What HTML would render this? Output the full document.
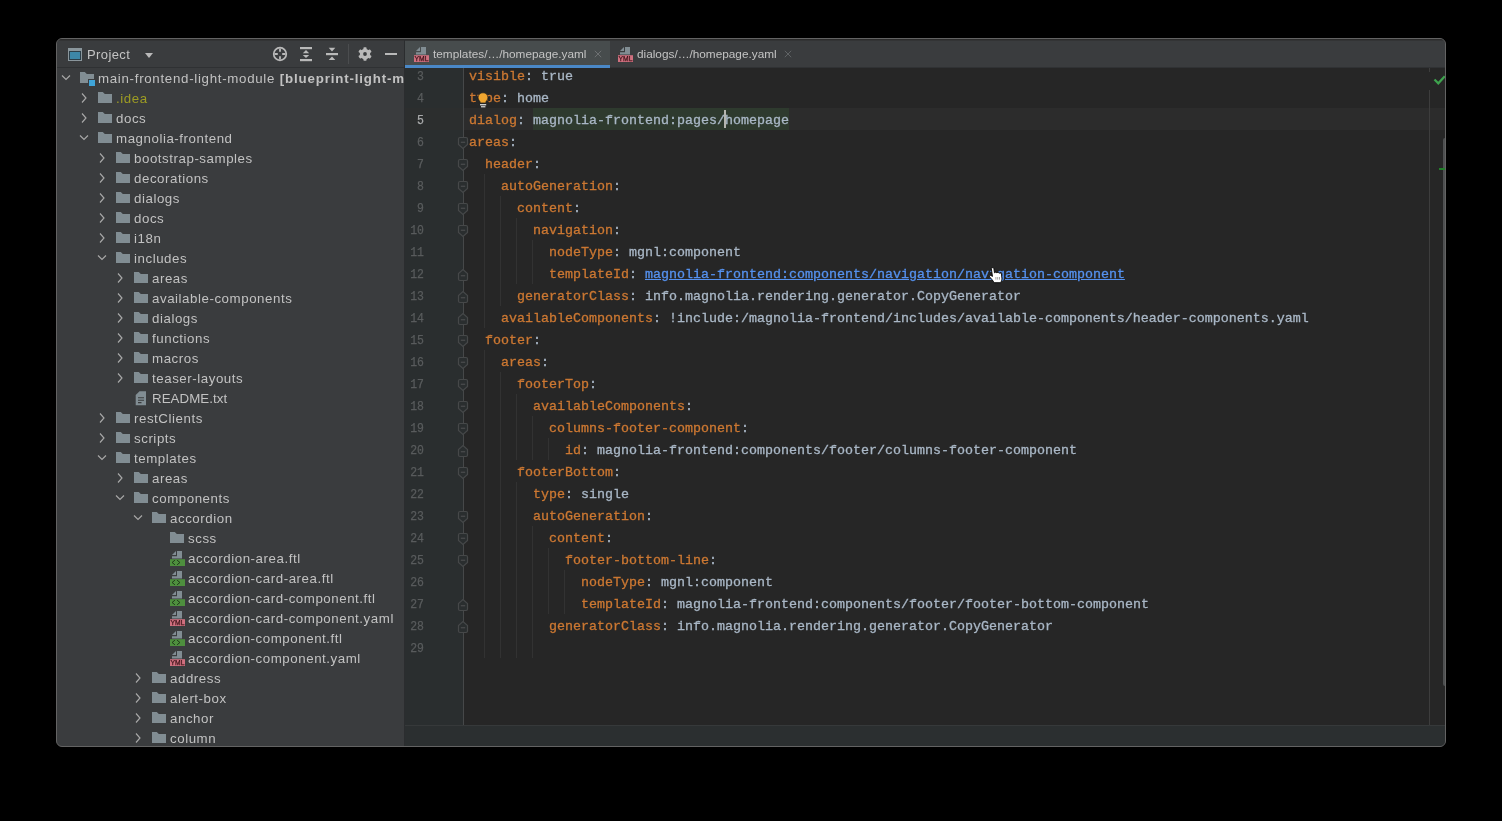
<!DOCTYPE html>
<html><head><meta charset="utf-8"><title>IDE</title><style>
*{margin:0;padding:0;box-sizing:border-box}
html,body{width:1502px;height:821px;background:#000000;overflow:hidden}
body{position:relative;font-family:"Liberation Sans",sans-serif}
#win{position:absolute;left:56px;top:38px;width:1390px;height:709px;border:1px solid #636363;border-radius:6px;overflow:hidden;background:#3a3c3e}
#in{position:absolute;left:-57px;top:-39px;width:1502px;height:821px;will-change:transform}
.abs{position:absolute}
#tree{position:absolute;left:57px;top:68px;width:347px;height:679px;overflow:hidden}
#treei{position:absolute;left:-57px;top:-68px;width:1502px;height:821px}
.tr{position:absolute;height:20px;line-height:20px;font-size:13.3px;letter-spacing:0.55px;white-space:nowrap}
.tr b{font-weight:bold;letter-spacing:0.85px}
.ln{position:absolute;left:405px;width:19px;height:22px;line-height:22px;text-align:right;font-family:"Liberation Mono",monospace;font-size:13.33px;color:#595c5d;transform:scaleX(0.86);transform-origin:100% 50%;-webkit-text-stroke:0.25px currentColor}
.ln.cur{color:#a9aaab}
.cl{position:absolute;height:22px;line-height:22px;font-family:"Liberation Mono",monospace;font-size:13.333px;white-space:pre;color:#a9b7c6;-webkit-text-stroke:0.3px currentColor}
.k{color:#cc7832}
.p{color:#a9b7c6}
.v{color:#a9b7c6}
.lk{color:#5591ee;text-decoration:underline}
.gd{position:absolute;width:1px;background:#323232}
.tab{position:absolute;top:40px;height:29px;line-height:29px;font-size:11.8px;color:#c4c4c4;white-space:nowrap}
.ptitle{position:absolute;left:87px;top:40.5px;height:28px;line-height:28px;font-size:13px;letter-spacing:0.4px;color:#c4c4c4}
</style></head>
<body>
<div id="win"><div id="in">
  <div class="abs" style="left:57px;top:39px;width:347px;height:28px;background:#3a3c3e"></div>
  <div class="abs" style="left:57px;top:67px;width:347px;height:1px;background:#2f3133"></div>
  <div class="abs" style="left:405px;top:39px;width:1041px;height:29px;background:#3a3c3e"></div>
  <div class="abs" style="left:405px;top:40px;width:205px;height:25px;background:#474c4d"></div>
  <div class="abs" style="left:57px;top:39px;width:1389px;height:1px;background:#2b2b2b"></div>
  <div class="abs" style="left:57px;top:40px;width:1389px;height:1px;background:#333435"></div>
  <div class="abs" style="left:405px;top:67px;width:1041px;height:1px;background:#303234"></div>
  <div class="abs" style="left:405px;top:65px;width:205px;height:3px;background:#4a88c7"></div>
  <div class="abs" style="left:404px;top:39px;width:1px;height:708px;background:#2b2d2f"></div>
  <div class="abs" style="left:405px;top:68px;width:59px;height:657px;background:#2a2e2f"></div>
  <div class="abs" style="left:464px;top:68px;width:982px;height:657px;background:#262626"></div>
  <div class="abs" style="left:464px;top:108px;width:982px;height:22px;background:#2c2c2c"></div>
  <div class="abs" style="left:405px;top:108px;width:58px;height:22px;background:#2c2e2e"></div>
  <div class="abs" style="left:533px;top:108px;width:256px;height:22px;background:#2e3a2e"></div>
  <div class="abs" style="left:463px;top:68px;width:1px;height:657px;background:#464849"></div>
  <div class="abs" style="left:405px;top:726px;width:1041px;height:22px;background:#2b2f30"></div>
  <div class="abs" style="left:405px;top:725px;width:1041px;height:1px;background:#36393a"></div>
  <div class="abs" style="left:1429px;top:68px;width:1px;height:4px;background:#3d3d3d"></div>
  <div class="abs" style="left:1429px;top:90px;width:1px;height:635px;background:#3d3d3d"></div>
  <div class="abs" style="left:1443px;top:138px;width:3px;height:548px;background:#4f5152;border-radius:2px 0 0 2px"></div>
  <div class="abs" style="left:1439px;top:168px;width:7px;height:2px;background:#23802b"></div>
  <div class="abs" style="left:724px;top:110px;width:2px;height:18px;background:#b5b5b0"></div>
  <div class="ptitle">Project</div>
  <div class="tab" style="left:433px">templates/…/homepage.yaml</div>
  <div class="tab" style="left:637px">dialogs/…/homepage.yaml</div>
  <div class="gd" style="left:484px;top:174px;height:154px"></div><div class="gd" style="left:500px;top:196px;height:110px"></div><div class="gd" style="left:516px;top:218px;height:66px"></div><div class="gd" style="left:532px;top:240px;height:44px"></div><div class="gd" style="left:484px;top:350px;height:308px"></div><div class="gd" style="left:500px;top:372px;height:286px"></div><div class="gd" style="left:516px;top:394px;height:66px"></div><div class="gd" style="left:532px;top:416px;height:44px"></div><div class="gd" style="left:548px;top:438px;height:22px"></div><div class="gd" style="left:516px;top:482px;height:176px"></div><div class="gd" style="left:532px;top:526px;height:132px"></div><div class="gd" style="left:548px;top:548px;height:66px"></div><div class="gd" style="left:564px;top:570px;height:44px"></div>
  <div id="tree"><div id="treei">
  <div class="tr" style="left:98px;top:69px;color:#c2c2c2;letter-spacing:0.7px;">main-frontend-light-module<b> [blueprint-light-module]</b></div><div class="tr" style="left:116px;top:89px;color:#9d9c24;">.idea</div><div class="tr" style="left:116px;top:109px;color:#c2c2c2;">docs</div><div class="tr" style="left:116px;top:129px;color:#c2c2c2;">magnolia-frontend</div><div class="tr" style="left:134px;top:149px;color:#c2c2c2;">bootstrap-samples</div><div class="tr" style="left:134px;top:169px;color:#c2c2c2;">decorations</div><div class="tr" style="left:134px;top:189px;color:#c2c2c2;">dialogs</div><div class="tr" style="left:134px;top:209px;color:#c2c2c2;">docs</div><div class="tr" style="left:134px;top:229px;color:#c2c2c2;">i18n</div><div class="tr" style="left:134px;top:249px;color:#c2c2c2;">includes</div><div class="tr" style="left:152px;top:269px;color:#c2c2c2;">areas</div><div class="tr" style="left:152px;top:289px;color:#c2c2c2;">available-components</div><div class="tr" style="left:152px;top:309px;color:#c2c2c2;">dialogs</div><div class="tr" style="left:152px;top:329px;color:#c2c2c2;">functions</div><div class="tr" style="left:152px;top:349px;color:#c2c2c2;">macros</div><div class="tr" style="left:152px;top:369px;color:#c2c2c2;">teaser-layouts</div><div class="tr" style="left:152px;top:389px;color:#c2c2c2;letter-spacing:0.05px;">README.txt</div><div class="tr" style="left:134px;top:409px;color:#c2c2c2;">restClients</div><div class="tr" style="left:134px;top:429px;color:#c2c2c2;">scripts</div><div class="tr" style="left:134px;top:449px;color:#c2c2c2;">templates</div><div class="tr" style="left:152px;top:469px;color:#c2c2c2;">areas</div><div class="tr" style="left:152px;top:489px;color:#c2c2c2;">components</div><div class="tr" style="left:170px;top:509px;color:#c2c2c2;">accordion</div><div class="tr" style="left:188px;top:529px;color:#c2c2c2;">scss</div><div class="tr" style="left:188px;top:549px;color:#c2c2c2;">accordion-area.ftl</div><div class="tr" style="left:188px;top:569px;color:#c2c2c2;">accordion-card-area.ftl</div><div class="tr" style="left:188px;top:589px;color:#c2c2c2;">accordion-card-component.ftl</div><div class="tr" style="left:188px;top:609px;color:#c2c2c2;">accordion-card-component.yaml</div><div class="tr" style="left:188px;top:629px;color:#c2c2c2;">accordion-component.ftl</div><div class="tr" style="left:188px;top:649px;color:#c2c2c2;">accordion-component.yaml</div><div class="tr" style="left:170px;top:669px;color:#c2c2c2;">address</div><div class="tr" style="left:170px;top:689px;color:#c2c2c2;">alert-box</div><div class="tr" style="left:170px;top:709px;color:#c2c2c2;">anchor</div><div class="tr" style="left:170px;top:729px;color:#c2c2c2;">column</div>
  <svg class="abs" style="left:0;top:0" width="1502" height="821" viewBox="0 0 1502 821"><path d="M62,75.5 L66,79.5 L70,75.5" fill="none" stroke="#a8a8a8" stroke-width="1.15"/><path d="M80,72 h4.8 l2,2 h7.2 v9 h-14 z" fill="#818d93"/><rect x="88.5" y="79.5" width="7" height="7" fill="#3fa4d8" stroke="#3a3c3e" stroke-width="1"/><path d="M82,93.5 L86,98 L82,102.5" fill="none" stroke="#a8a8a8" stroke-width="1.15"/><path d="M98,92 h4.8 l2,2 h7.2 v9 h-14 z" fill="#818d93"/><path d="M82,113.5 L86,118 L82,122.5" fill="none" stroke="#a8a8a8" stroke-width="1.15"/><path d="M98,112 h4.8 l2,2 h7.2 v9 h-14 z" fill="#818d93"/><path d="M80,135.5 L84,139.5 L88,135.5" fill="none" stroke="#a8a8a8" stroke-width="1.15"/><path d="M98,132 h4.8 l2,2 h7.2 v9 h-14 z" fill="#818d93"/><path d="M100,153.5 L104,158 L100,162.5" fill="none" stroke="#a8a8a8" stroke-width="1.15"/><path d="M116,152 h4.8 l2,2 h7.2 v9 h-14 z" fill="#818d93"/><path d="M100,173.5 L104,178 L100,182.5" fill="none" stroke="#a8a8a8" stroke-width="1.15"/><path d="M116,172 h4.8 l2,2 h7.2 v9 h-14 z" fill="#818d93"/><path d="M100,193.5 L104,198 L100,202.5" fill="none" stroke="#a8a8a8" stroke-width="1.15"/><path d="M116,192 h4.8 l2,2 h7.2 v9 h-14 z" fill="#818d93"/><path d="M100,213.5 L104,218 L100,222.5" fill="none" stroke="#a8a8a8" stroke-width="1.15"/><path d="M116,212 h4.8 l2,2 h7.2 v9 h-14 z" fill="#818d93"/><path d="M100,233.5 L104,238 L100,242.5" fill="none" stroke="#a8a8a8" stroke-width="1.15"/><path d="M116,232 h4.8 l2,2 h7.2 v9 h-14 z" fill="#818d93"/><path d="M98,255.5 L102,259.5 L106,255.5" fill="none" stroke="#a8a8a8" stroke-width="1.15"/><path d="M116,252 h4.8 l2,2 h7.2 v9 h-14 z" fill="#818d93"/><path d="M118,273.5 L122,278 L118,282.5" fill="none" stroke="#a8a8a8" stroke-width="1.15"/><path d="M134,272 h4.8 l2,2 h7.2 v9 h-14 z" fill="#818d93"/><path d="M118,293.5 L122,298 L118,302.5" fill="none" stroke="#a8a8a8" stroke-width="1.15"/><path d="M134,292 h4.8 l2,2 h7.2 v9 h-14 z" fill="#818d93"/><path d="M118,313.5 L122,318 L118,322.5" fill="none" stroke="#a8a8a8" stroke-width="1.15"/><path d="M134,312 h4.8 l2,2 h7.2 v9 h-14 z" fill="#818d93"/><path d="M118,333.5 L122,338 L118,342.5" fill="none" stroke="#a8a8a8" stroke-width="1.15"/><path d="M134,332 h4.8 l2,2 h7.2 v9 h-14 z" fill="#818d93"/><path d="M118,353.5 L122,358 L118,362.5" fill="none" stroke="#a8a8a8" stroke-width="1.15"/><path d="M134,352 h4.8 l2,2 h7.2 v9 h-14 z" fill="#818d93"/><path d="M118,373.5 L122,378 L118,382.5" fill="none" stroke="#a8a8a8" stroke-width="1.15"/><path d="M134,372 h4.8 l2,2 h7.2 v9 h-14 z" fill="#818d93"/><path d="M139.5,391.2 h6.5 v14 h-10.3 v-10.3 z" fill="#818d93"/><path d="M138,397.8 h6 M138,400.2 h6 M138,402.6 h3.5" stroke="#3a3c3e" stroke-width="1.1"/><path d="M100,413.5 L104,418 L100,422.5" fill="none" stroke="#a8a8a8" stroke-width="1.15"/><path d="M116,412 h4.8 l2,2 h7.2 v9 h-14 z" fill="#818d93"/><path d="M100,433.5 L104,438 L100,442.5" fill="none" stroke="#a8a8a8" stroke-width="1.15"/><path d="M116,432 h4.8 l2,2 h7.2 v9 h-14 z" fill="#818d93"/><path d="M98,455.5 L102,459.5 L106,455.5" fill="none" stroke="#a8a8a8" stroke-width="1.15"/><path d="M116,452 h4.8 l2,2 h7.2 v9 h-14 z" fill="#818d93"/><path d="M118,473.5 L122,478 L118,482.5" fill="none" stroke="#a8a8a8" stroke-width="1.15"/><path d="M134,472 h4.8 l2,2 h7.2 v9 h-14 z" fill="#818d93"/><path d="M116,495.5 L120,499.5 L124,495.5" fill="none" stroke="#a8a8a8" stroke-width="1.15"/><path d="M134,492 h4.8 l2,2 h7.2 v9 h-14 z" fill="#818d93"/><path d="M134,515.5 L138,519.5 L142,515.5" fill="none" stroke="#a8a8a8" stroke-width="1.15"/><path d="M152,512 h4.8 l2,2 h7.2 v9 h-14 z" fill="#818d93"/><path d="M170,532 h4.8 l2,2 h7.2 v9 h-14 z" fill="#818d93"/><path d="M177,551 h5 v7.5 h-10 v-2.2 h5 z" fill="#818d93"/><path d="M172,555 L176,551 v4 z" fill="#818d93"/><rect x="170" y="559.2" width="15" height="6.8" fill="#4e8f3e"/><path d="M174.9,560.2 l-2.8,2.3 l2.8,2.3 M177.1,560.2 l2.8,2.3 l-2.8,2.3" fill="none" stroke="#1c3416" stroke-width="0.95"/><path d="M177,571 h5 v7.5 h-10 v-2.2 h5 z" fill="#818d93"/><path d="M172,575 L176,571 v4 z" fill="#818d93"/><rect x="170" y="579.2" width="15" height="6.8" fill="#4e8f3e"/><path d="M174.9,580.2 l-2.8,2.3 l2.8,2.3 M177.1,580.2 l2.8,2.3 l-2.8,2.3" fill="none" stroke="#1c3416" stroke-width="0.95"/><path d="M177,591 h5 v7.5 h-10 v-2.2 h5 z" fill="#818d93"/><path d="M172,595 L176,591 v4 z" fill="#818d93"/><rect x="170" y="599.2" width="15" height="6.8" fill="#4e8f3e"/><path d="M174.9,600.2 l-2.8,2.3 l2.8,2.3 M177.1,600.2 l2.8,2.3 l-2.8,2.3" fill="none" stroke="#1c3416" stroke-width="0.95"/><path d="M177,611 h5 v7.5 h-10 v-2.2 h5 z" fill="#818d93"/><path d="M172,615 L176,611 v4 z" fill="#818d93"/><rect x="170" y="619.2" width="15" height="6.8" fill="#d0707f"/><text x="170.6" y="625.3" font-size="7.2" font-family="Liberation Sans" textLength="13.8" lengthAdjust="spacingAndGlyphs" fill="#3a1218" stroke="#3a1218" stroke-width="0.25">YML</text><path d="M177,631 h5 v7.5 h-10 v-2.2 h5 z" fill="#818d93"/><path d="M172,635 L176,631 v4 z" fill="#818d93"/><rect x="170" y="639.2" width="15" height="6.8" fill="#4e8f3e"/><path d="M174.9,640.2 l-2.8,2.3 l2.8,2.3 M177.1,640.2 l2.8,2.3 l-2.8,2.3" fill="none" stroke="#1c3416" stroke-width="0.95"/><path d="M177,651 h5 v7.5 h-10 v-2.2 h5 z" fill="#818d93"/><path d="M172,655 L176,651 v4 z" fill="#818d93"/><rect x="170" y="659.2" width="15" height="6.8" fill="#d0707f"/><text x="170.6" y="665.3" font-size="7.2" font-family="Liberation Sans" textLength="13.8" lengthAdjust="spacingAndGlyphs" fill="#3a1218" stroke="#3a1218" stroke-width="0.25">YML</text><path d="M136,673.5 L140,678 L136,682.5" fill="none" stroke="#a8a8a8" stroke-width="1.15"/><path d="M152,672 h4.8 l2,2 h7.2 v9 h-14 z" fill="#818d93"/><path d="M136,693.5 L140,698 L136,702.5" fill="none" stroke="#a8a8a8" stroke-width="1.15"/><path d="M152,692 h4.8 l2,2 h7.2 v9 h-14 z" fill="#818d93"/><path d="M136,713.5 L140,718 L136,722.5" fill="none" stroke="#a8a8a8" stroke-width="1.15"/><path d="M152,712 h4.8 l2,2 h7.2 v9 h-14 z" fill="#818d93"/><path d="M136,733.5 L140,738 L136,742.5" fill="none" stroke="#a8a8a8" stroke-width="1.15"/><path d="M152,732 h4.8 l2,2 h7.2 v9 h-14 z" fill="#818d93"/></svg>
  </div></div>
  <div class="ln" style="top:66px">3</div><div class="cl" style="top:66px;left:469px"><span class="k">visible</span><span class="p">:</span> <span class="v">true</span></div><div class="ln" style="top:88px">4</div><div class="cl" style="top:88px;left:469px"><span class="k">type</span><span class="p">:</span> <span class="v">home</span></div><div class="ln cur" style="top:110px">5</div><div class="cl" style="top:110px;left:469px"><span class="k">dialog</span><span class="p">:</span> <span class="v">magnolia-frontend:pages/homepage</span></div><div class="ln" style="top:132px">6</div><div class="cl" style="top:132px;left:469px"><span class="k">areas</span><span class="p">:</span></div><div class="ln" style="top:154px">7</div><div class="cl" style="top:154px;left:485px"><span class="k">header</span><span class="p">:</span></div><div class="ln" style="top:176px">8</div><div class="cl" style="top:176px;left:501px"><span class="k">autoGeneration</span><span class="p">:</span></div><div class="ln" style="top:198px">9</div><div class="cl" style="top:198px;left:517px"><span class="k">content</span><span class="p">:</span></div><div class="ln" style="top:220px">10</div><div class="cl" style="top:220px;left:533px"><span class="k">navigation</span><span class="p">:</span></div><div class="ln" style="top:242px">11</div><div class="cl" style="top:242px;left:549px"><span class="k">nodeType</span><span class="p">:</span> <span class="v">mgnl:component</span></div><div class="ln" style="top:264px">12</div><div class="cl" style="top:264px;left:549px"><span class="k">templateId</span><span class="p">:</span> <span class="lk">magnolia-frontend:components/navigation/navigation-component</span></div><div class="ln" style="top:286px">13</div><div class="cl" style="top:286px;left:517px"><span class="k">generatorClass</span><span class="p">:</span> <span class="v">info.magnolia.rendering.generator.CopyGenerator</span></div><div class="ln" style="top:308px">14</div><div class="cl" style="top:308px;left:501px"><span class="k">availableComponents</span><span class="p">:</span> <span class="v">!include:/magnolia-frontend/includes/available-components/header-components.yaml</span></div><div class="ln" style="top:330px">15</div><div class="cl" style="top:330px;left:485px"><span class="k">footer</span><span class="p">:</span></div><div class="ln" style="top:352px">16</div><div class="cl" style="top:352px;left:501px"><span class="k">areas</span><span class="p">:</span></div><div class="ln" style="top:374px">17</div><div class="cl" style="top:374px;left:517px"><span class="k">footerTop</span><span class="p">:</span></div><div class="ln" style="top:396px">18</div><div class="cl" style="top:396px;left:533px"><span class="k">availableComponents</span><span class="p">:</span></div><div class="ln" style="top:418px">19</div><div class="cl" style="top:418px;left:549px"><span class="k">columns-footer-component</span><span class="p">:</span></div><div class="ln" style="top:440px">20</div><div class="cl" style="top:440px;left:565px"><span class="k">id</span><span class="p">:</span> <span class="v">magnolia-frontend:components/footer/columns-footer-component</span></div><div class="ln" style="top:462px">21</div><div class="cl" style="top:462px;left:517px"><span class="k">footerBottom</span><span class="p">:</span></div><div class="ln" style="top:484px">22</div><div class="cl" style="top:484px;left:533px"><span class="k">type</span><span class="p">:</span> <span class="v">single</span></div><div class="ln" style="top:506px">23</div><div class="cl" style="top:506px;left:533px"><span class="k">autoGeneration</span><span class="p">:</span></div><div class="ln" style="top:528px">24</div><div class="cl" style="top:528px;left:549px"><span class="k">content</span><span class="p">:</span></div><div class="ln" style="top:550px">25</div><div class="cl" style="top:550px;left:565px"><span class="k">footer-bottom-line</span><span class="p">:</span></div><div class="ln" style="top:572px">26</div><div class="cl" style="top:572px;left:581px"><span class="k">nodeType</span><span class="p">:</span> <span class="v">mgnl:component</span></div><div class="ln" style="top:594px">27</div><div class="cl" style="top:594px;left:581px"><span class="k">templateId</span><span class="p">:</span> <span class="v">magnolia-frontend:components/footer/footer-bottom-component</span></div><div class="ln" style="top:616px">28</div><div class="cl" style="top:616px;left:549px"><span class="k">generatorClass</span><span class="p">:</span> <span class="v">info.magnolia.rendering.generator.CopyGenerator</span></div><div class="ln" style="top:638px">29</div>
  <svg class="abs" style="left:0;top:0" width="1502" height="821" viewBox="0 0 1502 821">
    <path d="M460,137.5 h6 q1.5,0 1.5,1.5 v5.5 l-4.5,4 l-4.5,-4 v-5.5 q0,-1.5 1.5,-1.5 z" fill="#2a2e2f" stroke="#464849" stroke-width="1.2"/><path d="M460.8,142.3 h4.4" stroke="#464849" stroke-width="1.4"/><path d="M460,159.5 h6 q1.5,0 1.5,1.5 v5.5 l-4.5,4 l-4.5,-4 v-5.5 q0,-1.5 1.5,-1.5 z" fill="#2a2e2f" stroke="#464849" stroke-width="1.2"/><path d="M460.8,164.3 h4.4" stroke="#464849" stroke-width="1.4"/><path d="M460,181.5 h6 q1.5,0 1.5,1.5 v5.5 l-4.5,4 l-4.5,-4 v-5.5 q0,-1.5 1.5,-1.5 z" fill="#2a2e2f" stroke="#464849" stroke-width="1.2"/><path d="M460.8,186.3 h4.4" stroke="#464849" stroke-width="1.4"/><path d="M460,203.5 h6 q1.5,0 1.5,1.5 v5.5 l-4.5,4 l-4.5,-4 v-5.5 q0,-1.5 1.5,-1.5 z" fill="#2a2e2f" stroke="#464849" stroke-width="1.2"/><path d="M460.8,208.3 h4.4" stroke="#464849" stroke-width="1.4"/><path d="M460,225.5 h6 q1.5,0 1.5,1.5 v5.5 l-4.5,4 l-4.5,-4 v-5.5 q0,-1.5 1.5,-1.5 z" fill="#2a2e2f" stroke="#464849" stroke-width="1.2"/><path d="M460.8,230.3 h4.4" stroke="#464849" stroke-width="1.4"/><path d="M460,335.5 h6 q1.5,0 1.5,1.5 v5.5 l-4.5,4 l-4.5,-4 v-5.5 q0,-1.5 1.5,-1.5 z" fill="#2a2e2f" stroke="#464849" stroke-width="1.2"/><path d="M460.8,340.3 h4.4" stroke="#464849" stroke-width="1.4"/><path d="M460,357.5 h6 q1.5,0 1.5,1.5 v5.5 l-4.5,4 l-4.5,-4 v-5.5 q0,-1.5 1.5,-1.5 z" fill="#2a2e2f" stroke="#464849" stroke-width="1.2"/><path d="M460.8,362.3 h4.4" stroke="#464849" stroke-width="1.4"/><path d="M460,379.5 h6 q1.5,0 1.5,1.5 v5.5 l-4.5,4 l-4.5,-4 v-5.5 q0,-1.5 1.5,-1.5 z" fill="#2a2e2f" stroke="#464849" stroke-width="1.2"/><path d="M460.8,384.3 h4.4" stroke="#464849" stroke-width="1.4"/><path d="M460,401.5 h6 q1.5,0 1.5,1.5 v5.5 l-4.5,4 l-4.5,-4 v-5.5 q0,-1.5 1.5,-1.5 z" fill="#2a2e2f" stroke="#464849" stroke-width="1.2"/><path d="M460.8,406.3 h4.4" stroke="#464849" stroke-width="1.4"/><path d="M460,423.5 h6 q1.5,0 1.5,1.5 v5.5 l-4.5,4 l-4.5,-4 v-5.5 q0,-1.5 1.5,-1.5 z" fill="#2a2e2f" stroke="#464849" stroke-width="1.2"/><path d="M460.8,428.3 h4.4" stroke="#464849" stroke-width="1.4"/><path d="M460,467.5 h6 q1.5,0 1.5,1.5 v5.5 l-4.5,4 l-4.5,-4 v-5.5 q0,-1.5 1.5,-1.5 z" fill="#2a2e2f" stroke="#464849" stroke-width="1.2"/><path d="M460.8,472.3 h4.4" stroke="#464849" stroke-width="1.4"/><path d="M460,511.5 h6 q1.5,0 1.5,1.5 v5.5 l-4.5,4 l-4.5,-4 v-5.5 q0,-1.5 1.5,-1.5 z" fill="#2a2e2f" stroke="#464849" stroke-width="1.2"/><path d="M460.8,516.3 h4.4" stroke="#464849" stroke-width="1.4"/><path d="M460,533.5 h6 q1.5,0 1.5,1.5 v5.5 l-4.5,4 l-4.5,-4 v-5.5 q0,-1.5 1.5,-1.5 z" fill="#2a2e2f" stroke="#464849" stroke-width="1.2"/><path d="M460.8,538.3 h4.4" stroke="#464849" stroke-width="1.4"/><path d="M460,555.5 h6 q1.5,0 1.5,1.5 v5.5 l-4.5,4 l-4.5,-4 v-5.5 q0,-1.5 1.5,-1.5 z" fill="#2a2e2f" stroke="#464849" stroke-width="1.2"/><path d="M460.8,560.3 h4.4" stroke="#464849" stroke-width="1.4"/><path d="M460,280.5 h6 q1.5,0 1.5,-1.5 v-5.5 l-4.5,-4 l-4.5,4 v5.5 q0,1.5 1.5,1.5 z" fill="#2a2e2f" stroke="#464849" stroke-width="1.2"/><path d="M460.8,275.7 h4.4" stroke="#464849" stroke-width="1.4"/><path d="M460,302.5 h6 q1.5,0 1.5,-1.5 v-5.5 l-4.5,-4 l-4.5,4 v5.5 q0,1.5 1.5,1.5 z" fill="#2a2e2f" stroke="#464849" stroke-width="1.2"/><path d="M460.8,297.7 h4.4" stroke="#464849" stroke-width="1.4"/><path d="M460,324.5 h6 q1.5,0 1.5,-1.5 v-5.5 l-4.5,-4 l-4.5,4 v5.5 q0,1.5 1.5,1.5 z" fill="#2a2e2f" stroke="#464849" stroke-width="1.2"/><path d="M460.8,319.7 h4.4" stroke="#464849" stroke-width="1.4"/><path d="M460,456.5 h6 q1.5,0 1.5,-1.5 v-5.5 l-4.5,-4 l-4.5,4 v5.5 q0,1.5 1.5,1.5 z" fill="#2a2e2f" stroke="#464849" stroke-width="1.2"/><path d="M460.8,451.7 h4.4" stroke="#464849" stroke-width="1.4"/><path d="M460,610.5 h6 q1.5,0 1.5,-1.5 v-5.5 l-4.5,-4 l-4.5,4 v5.5 q0,1.5 1.5,1.5 z" fill="#2a2e2f" stroke="#464849" stroke-width="1.2"/><path d="M460.8,605.7 h4.4" stroke="#464849" stroke-width="1.4"/><path d="M460,632.5 h6 q1.5,0 1.5,-1.5 v-5.5 l-4.5,-4 l-4.5,4 v5.5 q0,1.5 1.5,1.5 z" fill="#2a2e2f" stroke="#464849" stroke-width="1.2"/><path d="M460.8,627.7 h4.4" stroke="#464849" stroke-width="1.4"/>
    
<rect x="68" y="48" width="14" height="13" fill="#8a969c"/>
<rect x="69" y="51" width="12" height="9" fill="#2c3e48"/>
<rect x="70" y="52" width="10" height="7" fill="#3d87a8"/>
<path d="M145,53 h8 l-4,5 z" fill="#b9b9b9"/>
<circle cx="280" cy="54" r="6.3" fill="none" stroke="#b9b9b9" stroke-width="1.7"/>
<path d="M280,48.5 v3.3 M280,56.2 v3.3 M274.5,54 h3.3 M282.2,54 h3.3" stroke="#b9b9b9" stroke-width="1.8"/>
<rect x="300" y="47" width="12" height="2.2" fill="#b9b9b9"/>
<rect x="300" y="59" width="12" height="2.2" fill="#b9b9b9"/>
<path d="M302.8,53.2 L306,50 L309.2,53.2 z M302.8,54.9 L306,58.1 L309.2,54.9 z" fill="#b9b9b9"/>
<rect x="326" y="53" width="12" height="2.2" fill="#b9b9b9"/>
<path d="M328.7,47.8 L335.3,47.8 L332,51.4 z M328.7,60 L335.3,60 L332,56.6 z" fill="#b9b9b9"/>
<rect x="348" y="44" width="1" height="20" fill="#4b4d4f"/>
<circle cx="365" cy="54" r="5.2" fill="#b9b9b9"/>
<g fill="#b9b9b9"><rect x="363.4" y="47.2" width="3.2" height="3" rx="0.8"/><rect x="363.4" y="57.8" width="3.2" height="3" rx="0.8"/>
<rect x="363.4" y="47.2" width="3.2" height="3" rx="0.8" transform="rotate(60 365 54)"/><rect x="363.4" y="57.8" width="3.2" height="3" rx="0.8" transform="rotate(60 365 54)"/>
<rect x="363.4" y="47.2" width="3.2" height="3" rx="0.8" transform="rotate(-60 365 54)"/><rect x="363.4" y="57.8" width="3.2" height="3" rx="0.8" transform="rotate(-60 365 54)"/></g>
<circle cx="365" cy="54" r="1.9" fill="#3a3c3e"/>
<rect x="385" y="53" width="12" height="2" fill="#b9b9b9"/>

    
<path d="M421,47 h5 v7.5 h-10 v-2.2 h5 z" fill="#818d93"/><path d="M416,51 L420,47 v4 z" fill="#818d93"/><rect x="414" y="55.2" width="15" height="6.8" fill="#d0707f"/><text x="414.6" y="61.3" font-size="7.2" font-family="Liberation Sans" textLength="13.8" lengthAdjust="spacingAndGlyphs" fill="#3a1218" stroke="#3a1218" stroke-width="0.25">YML</text>
<path d="M625,47 h5 v7.5 h-10 v-2.2 h5 z" fill="#818d93"/><path d="M620,51 L624,47 v4 z" fill="#818d93"/><rect x="618" y="55.2" width="15" height="6.8" fill="#d0707f"/><text x="618.6" y="61.3" font-size="7.2" font-family="Liberation Sans" textLength="13.8" lengthAdjust="spacingAndGlyphs" fill="#3a1218" stroke="#3a1218" stroke-width="0.25">YML</text>
<path d="M594.8,50.8 l6.4,6.4 M601.2,50.8 l-6.4,6.4" stroke="#6d7072" stroke-width="1"/>
<path d="M784.8,50.8 l6.4,6.4 M791.2,50.8 l-6.4,6.4" stroke="#606365" stroke-width="1"/>
<path d="M1434.5,79.5 l3.8,3.8 l6.5,-7" fill="none" stroke="#3ea34e" stroke-width="2.2"/>
<rect x="477.5" y="100.5" width="11" height="7.5" fill="#262626"/>
<path d="M483,92.8 c2.8,0 4.8,2 4.8,4.8 c0,2 -1.2,3 -1.8,4 l-0.3,1.3 h-5.4 l-0.3,-1.3 c-0.6,-1 -1.8,-2 -1.8,-4 c0,-2.8 2,-4.8 4.8,-4.8 z" fill="#f0a630" stroke="#1d1d1d" stroke-width="0.6"/>
<rect x="480" y="104" width="6.2" height="1.4" fill="#d0d0d0"/>
<rect x="481" y="106.1" width="4.4" height="1.3" fill="#d0d0d0"/>
<path d="M991.3,268.6 c0.2,-1.2 2.4,-1.2 2.6,0 l0.6,4.2 c0.4,-0.9 2.1,-0.9 2.4,0.2 c0.4,-0.8 2,-0.8 2.3,0.3 c0.5,-0.6 2,-0.4 2.3,0.6 l0.4,4.6 c0.1,1.6 -0.7,3.2 -1.3,4.2 h-6.4 c-0.9,-1.6 -2.9,-4 -4.4,-5.6 c-0.8,-0.9 0,-2.2 1.2,-1.6 l1.5,0.9 z" fill="#ffffff" stroke="#000" stroke-width="0.9" stroke-linejoin="round"/>
<path d="M995.9,277 v2.6 M997.7,277 v2.6 M999.5,277 v2.6" stroke="#8a8a8a" stroke-width="0.8"/>

  </svg>
</div></div>
</body></html>
